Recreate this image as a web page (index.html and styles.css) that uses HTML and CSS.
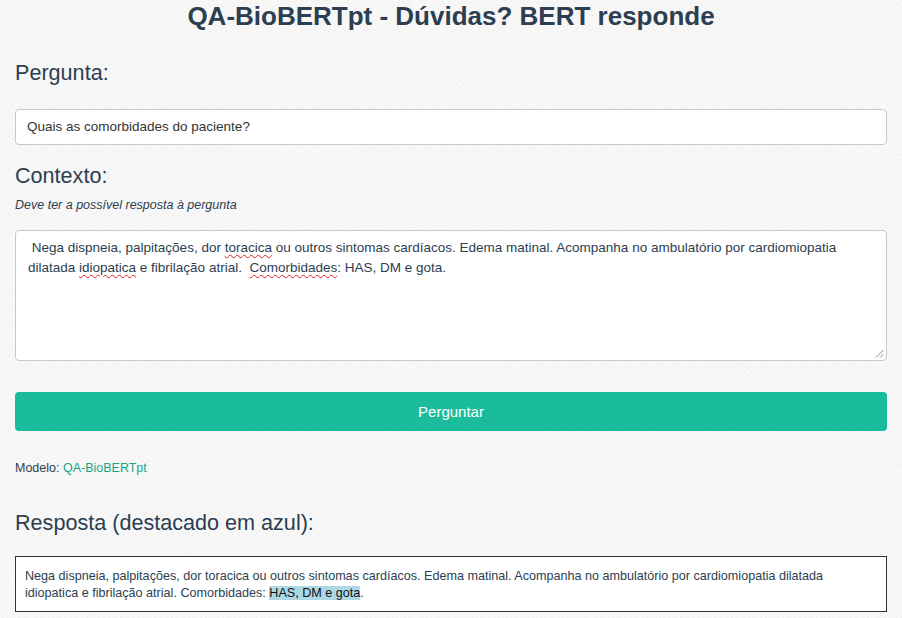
FILE: index.html
```html
<!DOCTYPE html>
<html lang="pt">
<head>
<meta charset="utf-8">
<title>QA-BioBERTpt</title>
<link rel="stylesheet" href="styles.css">
</head>
<body>
<main class="page">
  <h1 class="title">QA-BioBERTpt - Dúvidas? BERT responde</h1>

  <h3 class="label label-first">Pergunta:</h3>
  <div class="field input">Quais as comorbidades do paciente?</div>

  <h3 class="label">Contexto:</h3>
  <p class="hint">Deve ter a possível resposta à pergunta</p>
  <div class="field textarea"> Nega dispneia, palpitações, dor <span class="sp">toracica</span> ou outros sintomas cardíacos. Edema matinal. Acompanha no ambulatório por cardiomiopatia dilatada <span class="sp">idiopatica</span> e fibrilação atrial.  <span class="sp">Comorbidades</span>: HAS, DM e gota.<svg class="grip" width="9" height="9" viewBox="0 0 9 9"><path d="M8.5 1 L1 8.5 M8.5 5 L5 8.5" stroke="#888" stroke-width="1" fill="none"/></svg></div>

  <button class="btn" type="button">Perguntar</button>

  <p class="model">Modelo: <a href="#" class="model-link">QA-BioBERTpt</a></p>

  <h3 class="label label-answer">Resposta (destacado em azul):</h3>
  <div class="answer">Nega dispneia, palpitações, dor toracica ou outros sintomas cardíacos. Edema matinal. Acompanha no ambulatório por cardiomiopatia dilatada idiopatica e fibrilação atrial. Comorbidades: <mark class="hl">HAS, DM e gota</mark>.</div>
</main>
</body>
</html>
```

FILE: styles.css
```css
html, body {
  margin: 0;
  padding: 0;
}
body {
  font-family: "Liberation Sans", Arial, sans-serif;
  color: #2c3e50;
  background-color: #f6f6f6;
  background-image:
    repeating-linear-gradient(45deg, rgba(255,255,255,0.45) 0 1px, transparent 1px 3px),
    repeating-linear-gradient(-45deg, rgba(230,230,230,0.25) 0 1px, transparent 1px 4px);
  min-height: 618px;
}
.page {
  padding: 0 15px;
  display: flex;
  flex-direction: column;
}
.title {
  margin: 0;
  padding-top: 1px;
  font-size: 26px;
  line-height: 30px;
  font-weight: bold;
  text-align: center;
  color: #2c3e50;
}
.label {
  margin: 18px 0 0;
  font-size: 21.6px;
  line-height: 26px;
  font-weight: normal;
  color: #2c3e50;
}
.label-first {
  margin-top: 29px;
}
.field {
  background: #fff;
  border: 1px solid #c8c8c8;
  border-radius: 4px;
  font-size: 13.5px;
  line-height: 20px;
  color: #333;
}
.input {
  margin-top: 23px;
  box-sizing: border-box;
  height: 36px;
  padding: 7px 11px;
}
.hint {
  margin: 8px 0 0;
  font-size: 12.5px;
  line-height: 17px;
  font-style: italic;
  color: #2c3e50;
}
.textarea {
  position: relative;
  margin-top: 16px;
  box-sizing: border-box;
  height: 131px;
  padding: 7px 12px;
  white-space: pre-wrap;
  color: #2c3e50;
}
.sp {
  text-decoration: underline wavy #e02020;
  text-decoration-thickness: 1px;
  text-underline-offset: 2px;
}
.grip {
  position: absolute;
  right: 2px;
  bottom: 2px;
}
.btn {
  margin-top: 31px;
  height: 39px;
  border: 0;
  border-radius: 4px;
  background: #1abc9c;
  color: #fff;
  font-family: "Liberation Sans", Arial, sans-serif;
  font-size: 15px;
  padding: 0;
}
.model {
  margin: 29px 0 0;
  font-size: 12.5px;
  line-height: 17px;
  color: #2c3e50;
}
.model-link {
  color: #18a689;
  text-decoration: none;
}
.label-answer {
  margin-top: 33px;
}
.answer {
  margin-top: 20px;
  background: #fff;
  border: 1px solid #333;
  padding: 11px 9px 9px 9px;
  font-size: 12.6px;
  line-height: 17px;
  color: #2c3e50;
}
.hl {
  background: #add8e6;
  color: #111;
}
```
